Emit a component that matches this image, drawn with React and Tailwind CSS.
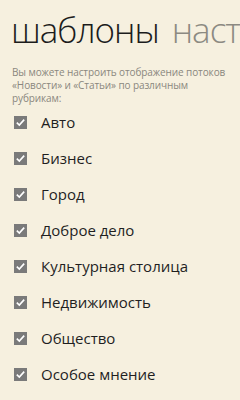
import React from "react";

const items = [
  "Авто",
  "Бизнес",
  "Город",
  "Доброе дело",
  "Культурная столица",
  "Недвижимость",
  "Общество",
  "Особое мнение",
];

function Check() {
  return (
    <div className="w-[13px] h-[13px] bg-[#7a7a7a] flex items-center justify-center shrink-0">
      <svg width="11" height="11" viewBox="0 0 11 11">
        <path d="M1.8 5.6 L4.3 8 L9.2 2.6" fill="none" stroke="#ffffff" strokeWidth="1.6" />
      </svg>
    </div>
  );
}

export default function App() {
  return (
    <div className="w-[240px] h-[400px] overflow-hidden bg-[#f6f0df] font-['Open_Sans',sans-serif]">
      <div className="flex whitespace-nowrap pl-[11px] pt-[8px] text-[35px] font-light leading-[44px] tracking-[-1px]">
        <span className="text-[#1c1c1c]">шаблоны</span>
        <span className="text-[#8c8a82] ml-[13px]">настройки</span>
      </div>
      <p className="mt-[14px] pl-[12px] text-[10px] leading-[13px] tracking-[-0.1px] text-[#8a877e] whitespace-nowrap">
        Вы можете настроить отображение потоков
        <br />
        «Новости» и «Статьи» по различным
        <br />
        рубрикам:
      </p>
      <div className="flex flex-col pl-[14px] -mt-[1px]">
        {items.map((t) => (
          <div key={t} className="flex items-center h-[36px]">
            <Check />
            <span className="ml-[14px] text-[15px] text-[#1f1f1f]">{t}</span>
          </div>
        ))}
      </div>
    </div>
  );
}
